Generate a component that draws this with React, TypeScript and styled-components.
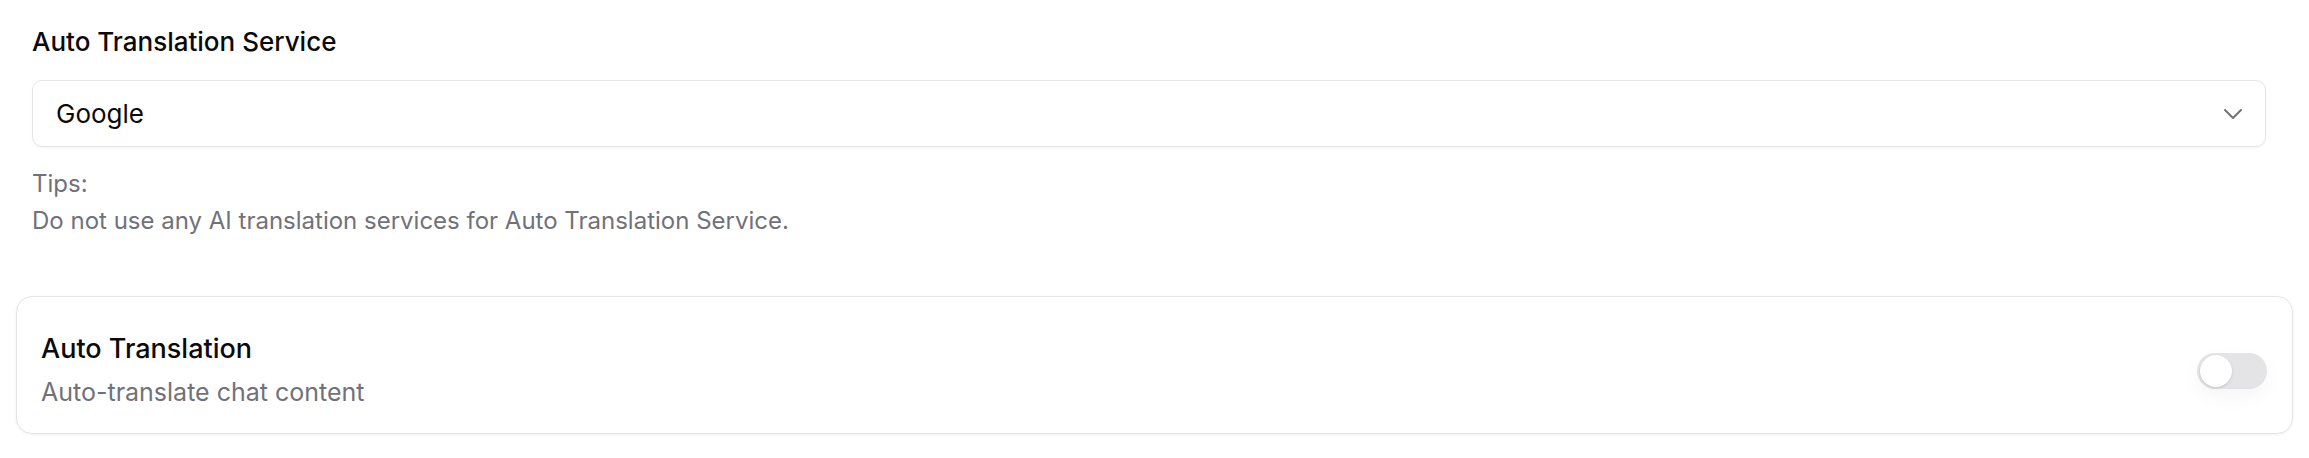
import styled, { createGlobalStyle } from 'styled-components';

const GlobalStyle = createGlobalStyle`
  body {
    margin: 0;
    background: #ffffff;
    font-family: 'Inter', 'Noto Sans', sans-serif;
    -webkit-font-smoothing: antialiased;
  }
`;

const Page = styled.div`
  padding: 0 16px 24px 16px;
`;

const ServiceSection = styled.div`
  padding: 24px 27px 0 16px;
`;

const Label = styled.div`
  font-size: 26px;
  line-height: 36px;
  font-weight: 500;
  color: #0a0a0a;
  margin-bottom: 20px;
`;

const SelectBox = styled.div`
  box-sizing: border-box;
  height: 67px;
  border: 1.5px solid #e4e4e7;
  border-radius: 10px;
  display: flex;
  align-items: center;
  justify-content: space-between;
  padding: 0 22px 0 23px;
  font-size: 26px;
  color: #0a0a0a;
  box-shadow: 0 1px 2px rgba(0, 0, 0, 0.04);
`;

const Tips = styled.div`
  margin-top: 18px;
  font-size: 24px;
  line-height: 37px;
  color: #71717a;
`;

const Card = styled.div`
  box-sizing: border-box;
  margin-top: 57px;
  height: 138px;
  border: 1.5px solid #e4e4e7;
  border-radius: 16px;
  display: flex;
  align-items: center;
  justify-content: space-between;
  padding: 8px 25px 0 24px;
  box-shadow: 0 1px 3px rgba(0, 0, 0, 0.06);
`;

const CardText = styled.div`
  display: flex;
  flex-direction: column;
  gap: 10px;
`;

const CardTitle = styled.div`
  font-size: 27px;
  line-height: 35px;
  font-weight: 500;
  color: #0a0a0a;
`;

const CardSub = styled.div`
  font-size: 25px;
  line-height: 32px;
  color: #71717a;
`;

const Track = styled.div<{ $on?: boolean }>`
  position: relative;
  width: 70px;
  height: 36px;
  border-radius: 18px;
  background: ${(p) => (p.$on ? '#18181b' : '#e4e4e7')};
  margin-top: 4px;
  box-shadow: 0 8px 20px rgba(0, 0, 0, 0.04);
`;

const Thumb = styled.div<{ $on?: boolean }>`
  position: absolute;
  top: 2px;
  left: ${(p) => (p.$on ? '36px' : '3px')};
  width: 32px;
  height: 32px;
  border-radius: 50%;
  background: #ffffff;
  box-shadow: 0 1px 3px rgba(0, 0, 0, 0.15);
`;

const Chevron = () => (
  <svg width="20" height="12" viewBox="0 0 20 12" fill="none">
    <polyline points="2,2 10,10 18,2" stroke="#737373" strokeWidth="2" strokeLinecap="round" strokeLinejoin="round" />
  </svg>
);

const App = () => {
  return (
    <Page>
      <GlobalStyle />
      <ServiceSection>
        <Label>Auto Translation Service</Label>
        <SelectBox>
          <span>Google</span>
          <Chevron />
        </SelectBox>
        <Tips>
          Tips:
          <br />
          Do not use any AI translation services for Auto Translation Service.
        </Tips>
      </ServiceSection>
      <Card>
        <CardText>
          <CardTitle>Auto Translation</CardTitle>
          <CardSub>Auto-translate chat content</CardSub>
        </CardText>
        <Track>
          <Thumb />
        </Track>
      </Card>
    </Page>
  );
};

export default App;
